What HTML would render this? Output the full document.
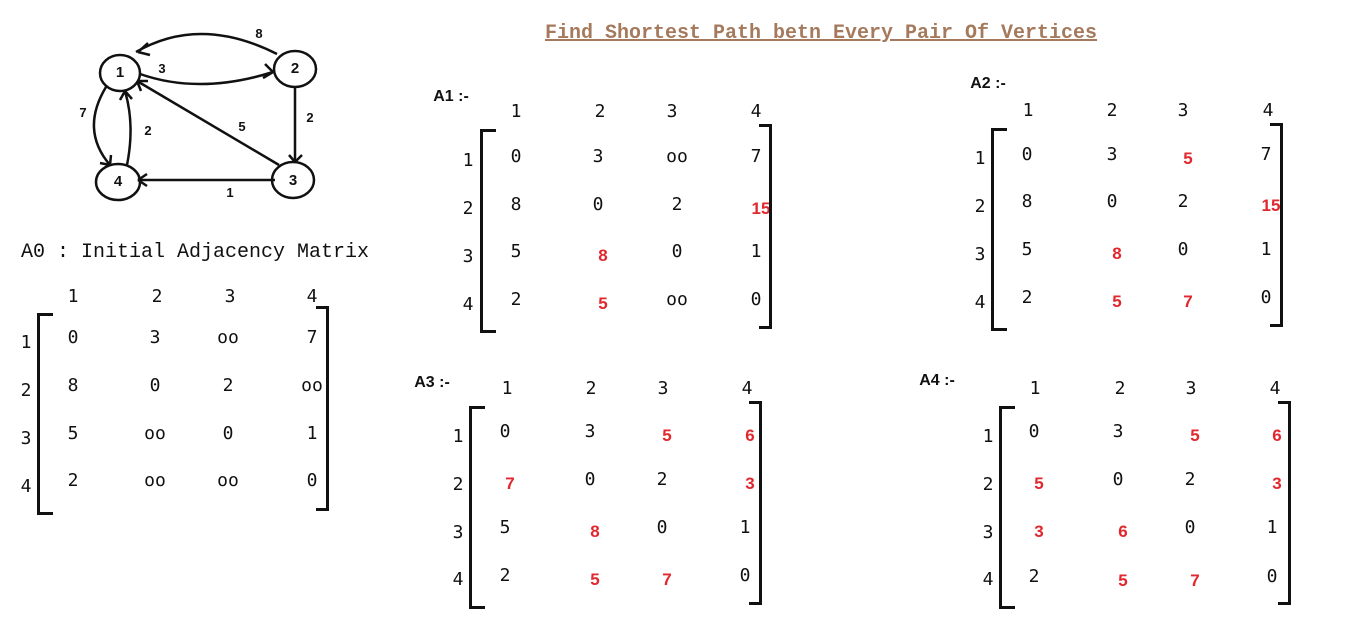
<!DOCTYPE html>
<html><head><meta charset="utf-8"><style>
body{margin:0;width:1354px;height:641px;background:#fff;position:relative;overflow:hidden;font-family:"DejaVu Sans Mono","Liberation Mono",monospace;color:#111}
.t{position:absolute;font-size:18px;line-height:20px;transform:translate(-50%,-50%);white-space:nowrap}
.r{color:#e0282e;font-weight:bold;font-family:"Liberation Sans",sans-serif;font-size:17px}
.b{font-weight:bold;font-family:"Liberation Sans",sans-serif;font-size:16px}
.lb{position:absolute;border:3px solid #111;border-right:none;width:13px}
.rb{position:absolute;border:3px solid #111;border-left:none;width:10px}
</style></head><body>
<svg width="1354" height="641" style="position:absolute;left:0;top:0" fill="none" stroke="#111" stroke-width="2.5">
<ellipse cx="120" cy="73" rx="20" ry="18"/><ellipse cx="295" cy="69" rx="21" ry="18"/>
<ellipse cx="293" cy="180" rx="21" ry="18"/><ellipse cx="118" cy="182" rx="22" ry="18"/>
<path d="M277 54 Q200 15 136 52"/><path d="M138 52 l10 -9 M138 52 l12 3"/>
<path d="M140 74 Q200 95 273 72"/><path d="M273 72 l-8 -8 M273 72 l-10 6"/>
<path d="M295 87 L295 162"/><path d="M295 162 l-6 -7 M295 162 l7 -7"/>
<path d="M275 180 L138 180"/><path d="M138 180 l9 -6 M138 180 l9 6"/>
<path d="M279 165 L137 81"/><path d="M137 81 l4 10 M137 81 l11 0"/>
<path d="M106 87 Q80 130 110 165"/><path d="M110 165 l-10 -2 M110 165 l1 -10"/>
<path d="M127 165 Q135 125 125 91"/><path d="M125 91 l-5 9 M125 91 l7 8"/>
</svg>
<div class="t b" style="left:259px;top:34px;font-size:13px">8</div>
<div class="t b" style="left:162px;top:69px;font-size:13px">3</div>
<div class="t b" style="left:310px;top:118px;font-size:13px">2</div>
<div class="t b" style="left:242px;top:127px;font-size:13px">5</div>
<div class="t b" style="left:83px;top:113px;font-size:13px">7</div>
<div class="t b" style="left:148px;top:131px;font-size:13px">2</div>
<div class="t b" style="left:230px;top:193px;font-size:13px">1</div>
<div class="t b" style="left:120px;top:73px;font-size:15px">1</div>
<div class="t b" style="left:295px;top:69px;font-size:15px">2</div>
<div class="t b" style="left:293px;top:181px;font-size:15px">3</div>
<div class="t b" style="left:118px;top:182px;font-size:15px">4</div>
<div class="t" style="left:821px;top:34px;font-size:20px;font-weight:bold;color:#a57a5c;font-family:'Liberation Mono',monospace"><u>Find Shortest Path </u><u>betn</u><u> Every Pair Of Vertices</u></div>
<div class="t" style="left:195px;top:253px;font-size:20px;font-family:'Liberation Mono',monospace">A0 : Initial Adjacency Matrix</div>
<div class="t b" style="left:451px;top:97px">A1 :-</div>
<div class="t b" style="left:988px;top:84px">A2 :-</div>
<div class="t b" style="left:432px;top:383px">A3 :-</div>
<div class="t b" style="left:937px;top:381px">A4 :-</div>
<div id="m"></div>
<script>
var M=[
{h:[[73,297],[157,297],[230,297],[312,297]],cx:[73,155,228,312],ry:[338,386,434,481],lx:26,ly:[343,391,439,487],lb:[37,313,509],rb:[328,306,505],
v:[["0","3","oo","7"],["8","0","2","oo"],["5","oo","0","1"],["2","oo","oo","0"]],red:[]},
{h:[[516,112],[600,112],[672,112],[756,112]],cx:[516,598,677,756],ry:[157,205,252,300],lx:468,ly:[161,209,257,305],lb:[480,129,327],rb:[771,124,323],
v:[["0","3","oo","7"],["8","0","2","15"],["5","8","0","1"],["2","5","oo","0"]],red:["1,3","2,1","3,1"]},
{h:[[1028,111],[1112,111],[1183,111],[1268,111]],cx:[1027,1112,1183,1266],ry:[155,202,250,298],lx:980,ly:[159,207,255,303],lb:[991,128,325],rb:[1282,123,321],
v:[["0","3","5","7"],["8","0","2","15"],["5","8","0","1"],["2","5","7","0"]],red:["0,2","1,3","2,1","3,1","3,2"]},
{h:[[507,389],[591,389],[663,389],[747,389]],cx:[505,590,662,745],ry:[432,480,528,576],lx:458,ly:[437,485,533,580],lb:[469,406,603],rb:[761,401,599],
v:[["0","3","5","6"],["7","0","2","3"],["5","8","0","1"],["2","5","7","0"]],red:["0,2","0,3","1,0","1,3","2,1","3,1","3,2"]},
{h:[[1035,389],[1120,389],[1191,389],[1275,389]],cx:[1034,1118,1190,1272],ry:[432,480,528,577],lx:988,ly:[437,485,533,580],lb:[999,406,603],rb:[1290,401,599],
v:[["0","3","5","6"],["5","0","2","3"],["3","6","0","1"],["2","5","7","0"]],red:["0,2","0,3","1,0","1,3","2,0","2,1","3,1","3,2"]}];
var h="";
M.forEach(function(m){
m.h.forEach(function(p,i){h+='<div class="t" style="left:'+p[0]+'px;top:'+p[1]+'px">'+(i+1)+'</div>'});
m.ly.forEach(function(y,i){h+='<div class="t" style="left:'+m.lx+'px;top:'+y+'px">'+(i+1)+'</div>'});
for(var r=0;r<4;r++)for(var c=0;c<4;c++){var red=m.red.indexOf(r+","+c)>=0;var dy=red?4:0;
h+='<div class="t'+(red?' r':'')+'" style="left:'+(m.cx[c]+(red?5:0))+'px;top:'+(m.ry[r]+dy)+'px">'+m.v[r][c]+'</div>';}
h+='<div class="lb" style="left:'+m.lb[0]+'px;top:'+m.lb[1]+'px;height:'+(m.lb[2]-m.lb[1])+'px"></div>';
h+='<div class="rb" style="left:'+(m.rb[0]-12)+'px;top:'+m.rb[1]+'px;height:'+(m.rb[2]-m.rb[1])+'px"></div>';
});
document.getElementById("m").innerHTML=h;
</script>
</body></html>
